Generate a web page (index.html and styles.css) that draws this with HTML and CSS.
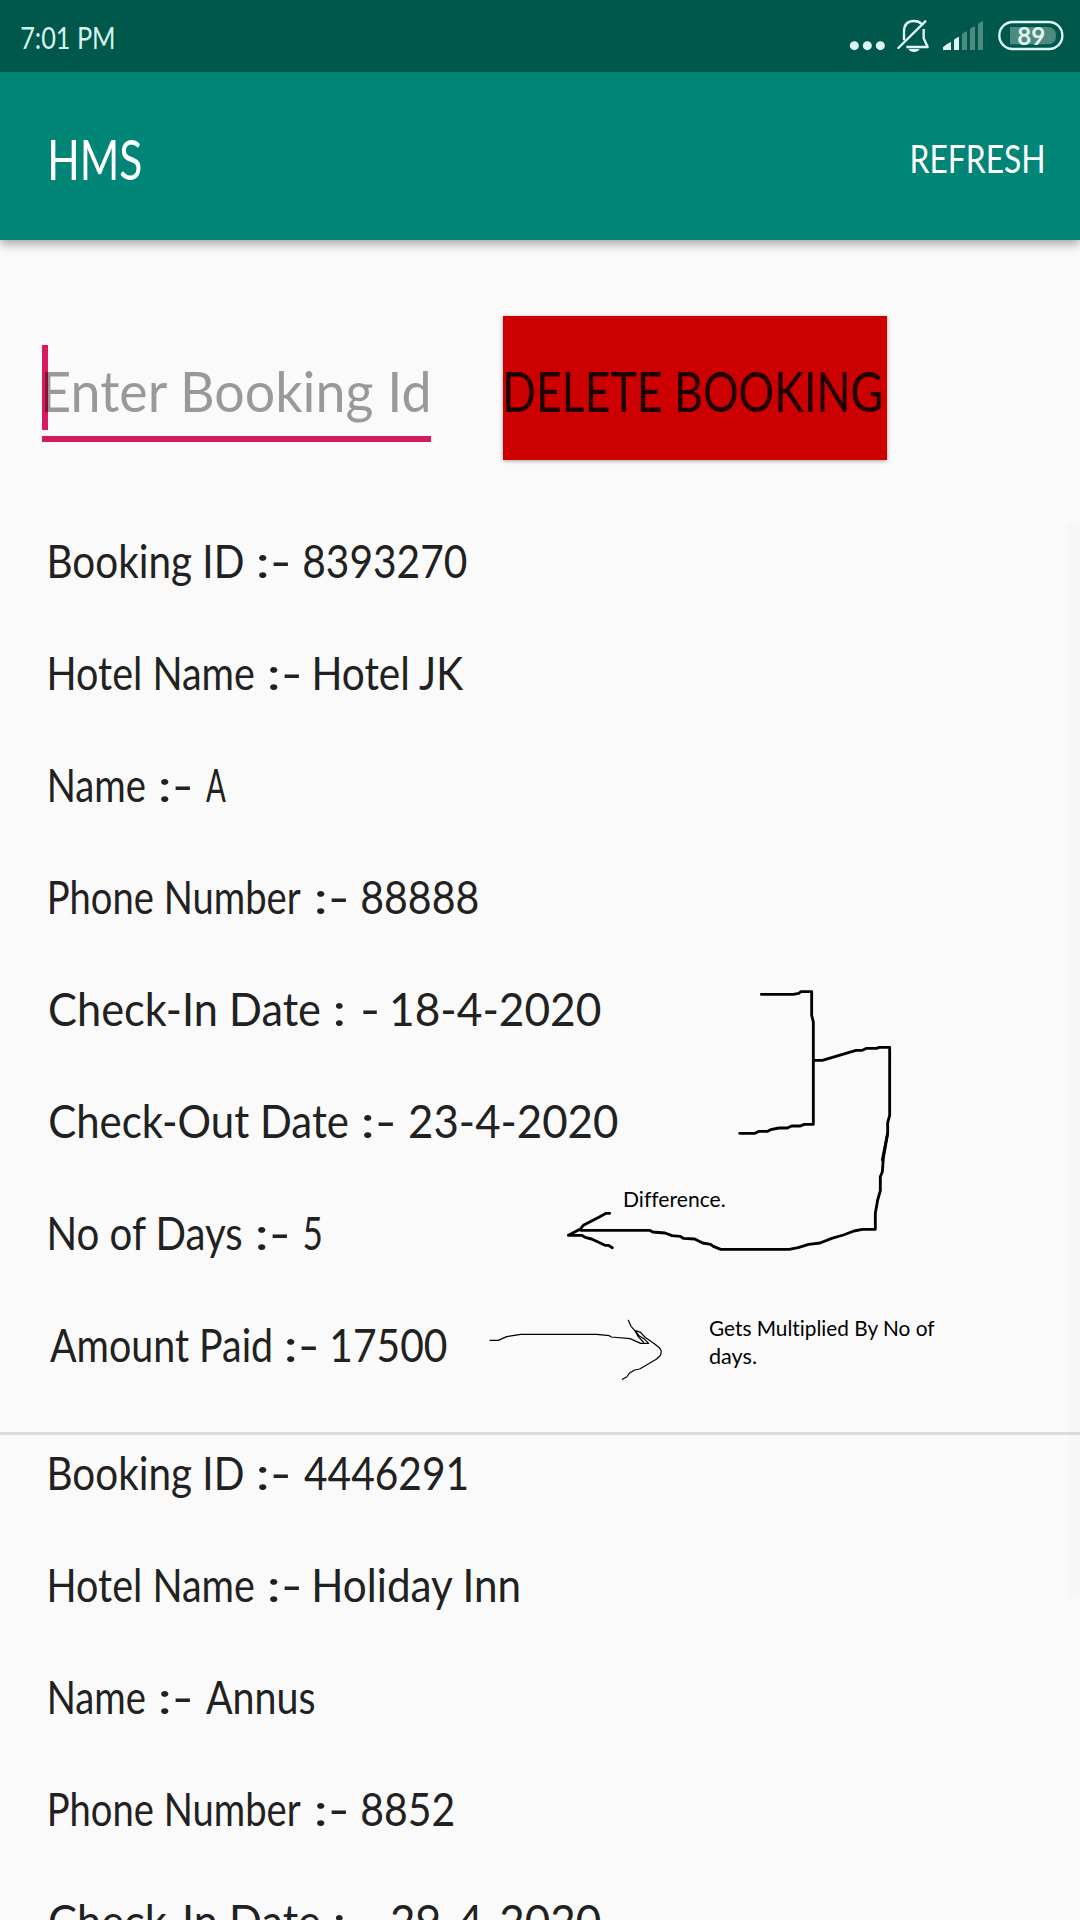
FILE: index.html
```html
<!DOCTYPE html>
<html lang="en">
<head>
<meta charset="utf-8">
<title>HMS</title>
<link rel="stylesheet" href="styles.css">
</head>
<body>
<header class="status">
  <span class="time fit" data-w="93">7:01 PM</span>
  <svg class="status-icons" viewBox="0 0 780 216" aria-hidden="true">
    <g fill="#e0f5f1">
      <circle cx="103" cy="137" r="13.5"/><circle cx="142" cy="137" r="13.5"/><circle cx="181" cy="137" r="13.5"/>
      <path d="M265 147h34q-5 9-17 9t-17-9z"/>
      <path d="M369 150v-8q8-10 24-16v24zM402 150v-31q6-6 15-9v40z"/>
    </g>
    <g fill="none" stroke="#e0f5f1" stroke-width="7" stroke-linecap="round" stroke-linejoin="round">
      <path d="M235 144L316 64"/>
      <path d="M252 118V95q0-32 30-32 15 0 23 9"/>
      <path d="M311 87v28l12 26h-64" stroke-linecap="butt"/>
    </g>
    <g fill="#4d8b80">
      <path d="M426 150v-48q6-6 15-8v56zM450 150V87q6-6 15-8v71zM474 150V72q6-6 15-9v87z"/>
      <path d="M570 81h112q26 0 26 26t-26 26H570z"/>
    </g>
    <rect x="538" y="66" width="189" height="81" rx="40" fill="none" stroke="#e0f5f1" stroke-width="7"/>
    <text class="battery" x="592" y="134" textLength="84" lengthAdjust="spacingAndGlyphs">89</text>
  </svg>
</header>
<div class="toolbar">
  <h1 class="title fit" data-w="90">HMS</h1>
  <span class="refresh fit" data-w="131">REFRESH</span>
</div>
<main>
  <div class="form">
    <div class="field"><i class="caret"></i><span class="hint fit" data-w="384">Enter Booking Id</span></div>
    <div class="delete"><span class="fit" data-w="375">DELETE BOOKING</span></div>
  </div>
  <section class="booking">
    <p><span class="fit" data-w="193">Booking ID</span> <span class="fit" data-w="31">:-</span> <span class="fit" data-w="163">8393270</span></p>
    <p><span class="fit" data-w="204">Hotel Name</span> <span class="fit" data-w="31">:-</span> <span class="fit" data-w="150">Hotel JK</span></p>
    <p><span class="fit" data-w="95">Name</span> <span class="fit" data-w="31">:-</span> <span class="fit" data-w="20">A</span></p>
    <p><span class="fit" data-w="251">Phone Number</span> <span class="fit" data-w="31">:-</span> <span class="fit" data-w="116">88888</span></p>
    <p><span class="fit" data-w="270">Check-In Date</span> <span class="fit" data-w="43">: -</span> <span class="fit" data-w="209">18-4-2020</span></p>
    <p><span class="fit" data-w="298">Check-Out Date</span> <span class="fit" data-w="31">:-</span> <span class="fit" data-w="208">23-4-2020</span></p>
    <p><span class="fit" data-w="192">No of Days</span> <span class="fit" data-w="31">:-</span> <span class="fit" data-w="17">5</span></p>
    <p><span class="fit" data-w="221">Amount Paid</span> <span class="fit" data-w="31">:-</span> <span class="fit" data-w="115">17500</span></p>
  </section>
  <section class="booking">
    <p><span class="fit" data-w="193">Booking ID</span> <span class="fit" data-w="31">:-</span> <span class="fit" data-w="163">4446291</span></p>
    <p><span class="fit" data-w="204">Hotel Name</span> <span class="fit" data-w="31">:-</span> <span class="fit" data-w="205">Holiday Inn</span></p>
    <p><span class="fit" data-w="95">Name</span> <span class="fit" data-w="31">:-</span> <span class="fit" data-w="108">Annus</span></p>
    <p><span class="fit" data-w="251">Phone Number</span> <span class="fit" data-w="31">:-</span> <span class="fit" data-w="91">8852</span></p>
    <p><span class="fit" data-w="270">Check-In Date</span> <span class="fit" data-w="43">: -</span> <span class="fit" data-w="209">29-4-2020</span></p>
  </section>
</main>
<i class="scrollbar"></i>
<svg class="ink" viewBox="0 0 1080 1920" aria-hidden="true">
  <g transform="translate(700 960) scale(.33333)" stroke-width="8.5">
    <path d="M184 103H280L296 100 303 95H335V166L340 186V493H313L301 498H275L262 504H237L212 509 203 514H177L165 520H119"/>
    <path d="M341 301H367L468 271H487L500 265H530L538 262H569V466L563 488V519L547 600"/>
  </g>
  <g transform="translate(540 1120) scale(.33333)" stroke-width="8.5">
    <path d="M1043 40L1030 115 1027 155 1021 170V212L1013 240 1006 280V328H967L942 333 910 345 875 355 840 369 806 373 774 383 748 388H542L520 379 512 373 488 369 464 357 430 355 420 349 396 347 375 339 338 336 330 331H122"/>
    <path d="M209 280H198L178 291 130 316 120 328 85 346H125L138 353 155 357 195 376H205L217 383"/>
  </g>
  <g transform="translate(470 1290) scale(.33333)" stroke-width="3.6">
    <path d="M60 151H85L110 140 152 133H380L418 137 424 141 480 146 512 160H536L524 148 508 138 494 121 483 109 475 91M494 121L512 127 524 141 538 151 553 161 568 173 574 183 572 195 560 207 536 221 509 237 494 240 478 250 470 261 457 268M494 121L504 139 520 156"/>
  </g>
</svg>
<div class="note note-diff"><span class="fit" data-w="100">Difference.</span></div>
<div class="note note-amount"><span class="fit" data-w="227">Gets Multiplied By No of</span><br><span class="fit" data-w="47">days.</span></div>
<script src="fit.js"></script>
</body>
</html>
```
FILE: styles.css
```css
* { box-sizing: border-box; margin: 0; padding: 0; }
html, body { width: 1080px; height: 1920px; overflow: hidden; }
body {
  position: relative;
  background: #fafafa;
  color: #212121;
  font-family: Lato, "Open Sans", sans-serif;
  font-variant-ligatures: none;
}
.fit {
  display: inline-block;
  flex: none;
  white-space: nowrap;
  transform-origin: 0 50%;
}
.status {
  height: 72px;
  background: #00574b;
  display: flex;
  justify-content: space-between;
  padding-left: 21px;
}
.time { font-size: 30px; line-height: 75px; color: #d5f3ec; }
.status-icons { width: 260px; height: 72px; display: block; }
.battery { font: bold 76px Lato, sans-serif; fill: #e0f5f1; }
.toolbar {
  height: 168px;
  padding: 3px 37px 0 51px;
  background: #008577;
  color: #fff;
  display: flex;
  align-items: center;
  justify-content: space-between;
  box-shadow: 0 4px 10px rgba(0, 0, 0, .35);
  clip-path: inset(0 0 -20px 0);
}
.title { font-size: 57px; font-weight: 400; }
.refresh { font-size: 38px; }
.form {
  display: flex;
  align-items: flex-start;
  gap: 72px;
  padding: 76px 0 0 42px;
  height: 291px;
}
.field {
  position: relative;
  width: 389px;
  height: 97px;
  margin-top: 29px;
  padding: 3px 0 0 3px;
  border-bottom: 6px solid #d01d60;
  font-size: 57px;
  line-height: 85px;
}
.caret {
  position: absolute;
  left: 0;
  top: 0;
  width: 6px;
  height: 85px;
  background: #d81b60;
}
.hint { position: relative; color: rgba(0, 0, 0, .39); }
.delete {
  width: 384px;
  height: 144px;
  padding: 4px 0 0 3px;
  background: #c00;
  color: #1f0000;
  font-size: 57px;
  line-height: 141px;
  box-shadow: 0 1px 4px rgba(0, 0, 0, .35);
}
.booking { padding: 0 0 57px 50px; }
.booking + .booking { border-top: 3px solid #dcdcdc; padding-top: 8px; }
.booking p {
  display: flex;
  gap: 15px;
  height: 60px;
  margin-bottom: 52px;
  font-size: 45.5px;
  line-height: 60px;
}
.booking p:last-child { margin-bottom: 0; }
.scrollbar {
  position: absolute;
  right: 0;
  top: 523px;
  width: 12px;
  height: 1075px;
  background: rgba(0, 0, 0, .012);
}
.ink {
  position: absolute;
  left: 0;
  top: 0;
  width: 1080px;
  height: 1920px;
  fill: none;
  stroke: #000;
  stroke-linecap: round;
  stroke-linejoin: round;
}
.note { position: absolute; color: #000; font-size: 21px; line-height: 28px; }
.note-diff { left: 624px; top: 1185px; }
.note-amount { left: 709px; top: 1314px; }
```
FILE: fit.js
```js
// Condenses or widens each label so its visible glyphs span data-w pixels.
const ctx = document.createElement('canvas').getContext('2d');
document.querySelectorAll('.fit').forEach(el => {
  const cs = getComputedStyle(el);
  ctx.font = `${cs.fontWeight} ${cs.fontSize} Lato, "Open Sans", sans-serif`;
  const m = ctx.measureText(el.textContent);
  const w = Number(el.dataset.w);
  const scale = w / (m.actualBoundingBoxLeft + m.actualBoundingBoxRight);
  const natural = el.offsetWidth;
  el.style.transform = `translateX(${m.actualBoundingBoxLeft * scale}px) scaleX(${scale})`;
  el.style.marginRight = `${w - natural}px`;
});
```
